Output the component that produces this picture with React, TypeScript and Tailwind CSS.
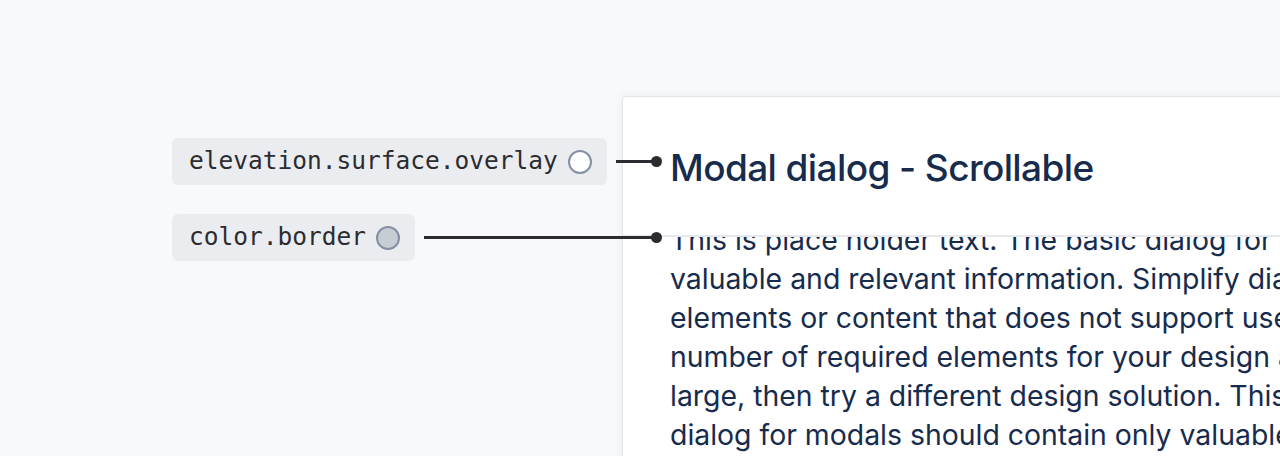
import React from "react";

const bodyLines = [
  "This is place holder text. The basic dialog for modals should contain only",
  "valuable and relevant information. Simplify dialogs by removing unnecessary",
  "elements or content that does not support user tasks. If you find that the",
  "number of required elements for your design are making the dialog excessively",
  "large, then try a different design solution. This is place holder text. The basic",
  "dialog for modals should contain only valuable and relevant information.",
];

function TokenRow({ label, swatch }: { label: string; swatch: string }) {
  return (
    <div className="flex items-center">
      <div className="flex h-[47px] items-center gap-[10px] rounded-[6px] bg-[#ebecf0] pl-[17px] pr-[15px]">
        <span className="font-['DejaVu_Sans_Mono',monospace] text-[24.5px] leading-none text-[#2c2c30]">
          {label}
        </span>
        <span className={"h-6 w-6 rounded-full border-2 border-[#8590a2] " + swatch} />
      </div>
      <div className="ml-[9px] h-[3px] flex-1 bg-[#2c2c30]" />
      <div className="-ml-[2px] h-[11px] w-[11px] rounded-full bg-[#2c2c30]" />
    </div>
  );
}

export default function App() {
  return (
    <div className="relative h-[456px] w-[1280px] overflow-hidden bg-[#f8f9fb] font-['Inter',sans-serif]">
      <div className="ml-[622px] mt-[96px] h-[420px] w-[900px] rounded-[4px] border border-[#e2e4e9] bg-white shadow-[0_0_8px_rgba(9,30,66,0.06)]">
        <div className="flex h-[140px] items-center border-b-2 border-[#e6e8ec] pl-[47px] pt-[4px]">
          <h1 className="text-[37px] font-medium tracking-[-0.6px] text-[#172b4d]">Modal dialog - Scrollable</h1>
        </div>
        <div className="h-[280px] overflow-hidden pl-[47px]">
          <div className="-mt-[17px] text-[28.4px] leading-[39px] text-[#172b4d]">
            {bodyLines.map((l) => (
              <div key={l} className="whitespace-nowrap">{l}</div>
            ))}
          </div>
        </div>
      </div>

      {/* token annotations */}
      <div className="absolute left-[172px] top-[138px] flex w-[490px] flex-col gap-[29px]">
        <TokenRow label="elevation.surface.overlay" swatch="bg-white" />
        <TokenRow label="color.border" swatch="bg-[#c8ccd3]" />
      </div>
    </div>
  );
}
